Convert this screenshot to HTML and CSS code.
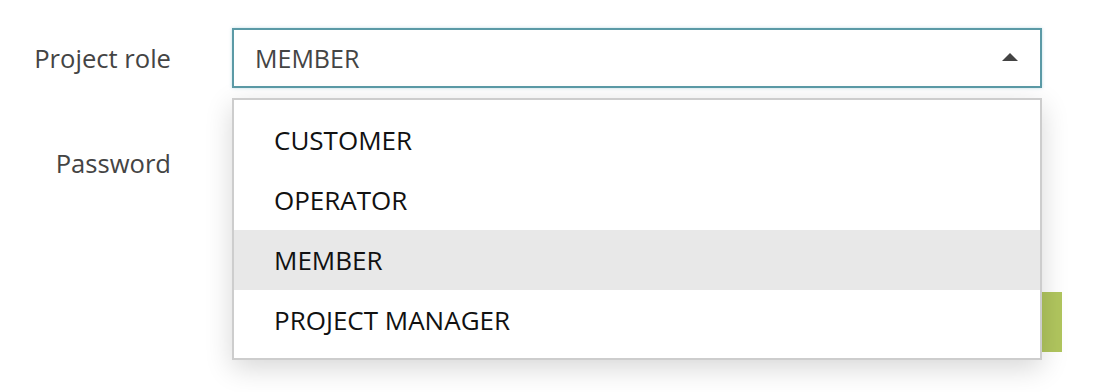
FILE: index.html
```html
<!DOCTYPE html>
<html lang="en">
<head>
    <meta charset="UTF-8">
    <meta name="viewport" content="width=device-width, initial-scale=1.0">
    <title>Project member</title>
    <link rel="stylesheet" href="styles.css">
</head>
<body>

    <form class="member-form">
        <div class="form-row">
            <label class="form-label">Project role</label>
            <div class="form-field">
                <div class="select is-open">
                    <span class="select-value">MEMBER</span>
                    <span class="select-arrow"></span>
                </div>
                <ul class="select-menu">
                    <li>CUSTOMER</li>
                    <li>OPERATOR</li>
                    <li class="is-active">MEMBER</li>
                    <li>PROJECT MANAGER</li>
                </ul>
            </div>
        </div>

        <div class="form-row">
            <label class="form-label">Password</label>
            <div class="form-field">
                <input type="password" class="text-input">
            </div>
        </div>

        <div class="form-row form-actions">
            <div class="form-label"></div>
            <div class="form-field">
                <button type="button" class="btn-save">Save</button>
            </div>
        </div>
    </form>

</body>
</html>
```

FILE: styles.css
```css
body, html {
    margin: 0;
    padding: 0;
    background: #fff;
    font-family: "Open Sans", Arial, sans-serif;
}

body {
    min-height: 392px;
}

.member-form {
    display: flex;
    flex-direction: column;
    gap: 45px;
    padding-top: 28px;
}

.form-row {
    display: grid;
    grid-template-columns: 171px 830px;
    column-gap: 61px;
    align-items: center;
}

.form-label {
    text-align: right;
    font-size: 25.6px;
    color: #444;
}

.form-field {
    position: relative;
}

.select {
    width: 810px;
    height: 60px;
    box-sizing: border-box;
    border: 2px solid #5b9aa6;
    box-shadow: 0 0 3px rgba(110, 180, 200, 0.45);
    display: flex;
    align-items: center;
    justify-content: space-between;
    padding: 0 22px 0 21px;
}

.select-value {
    font-size: 25px;
    color: #444;
}

.select-arrow {
    width: 0;
    height: 0;
    border-left: 8px solid transparent;
    border-right: 8px solid transparent;
    border-bottom: 8px solid #444;
    margin-top: -2px;
}

.select-menu {
    position: absolute;
    top: 70px;
    left: 0;
    z-index: 10;
    width: 810px;
    box-sizing: border-box;
    margin: 0;
    padding: 10px 0 8px;
    list-style: none;
    background: #fff;
    border: 2px solid #cdcdcd;
    box-shadow: 0 8px 26px rgba(0, 0, 0, 0.16);
}

.select-menu li {
    height: 60px;
    line-height: 60px;
    padding-left: 40px;
    font-size: 26px;
    color: #111;
}

.select-menu li.is-active {
    background: #e8e8e8;
}

.text-input {
    display: block;
    width: 810px;
    height: 60px;
    box-sizing: border-box;
    border: 1px solid #ccc;
}

.form-actions {
    margin-top: 54px;
}

.form-field .btn-save {
    display: block;
    margin-left: auto;
    width: 180px;
    height: 60px;
    border: 0;
    background: #b1c65e;
    color: #fff;
    font-family: inherit;
    font-size: 22px;
}
```
